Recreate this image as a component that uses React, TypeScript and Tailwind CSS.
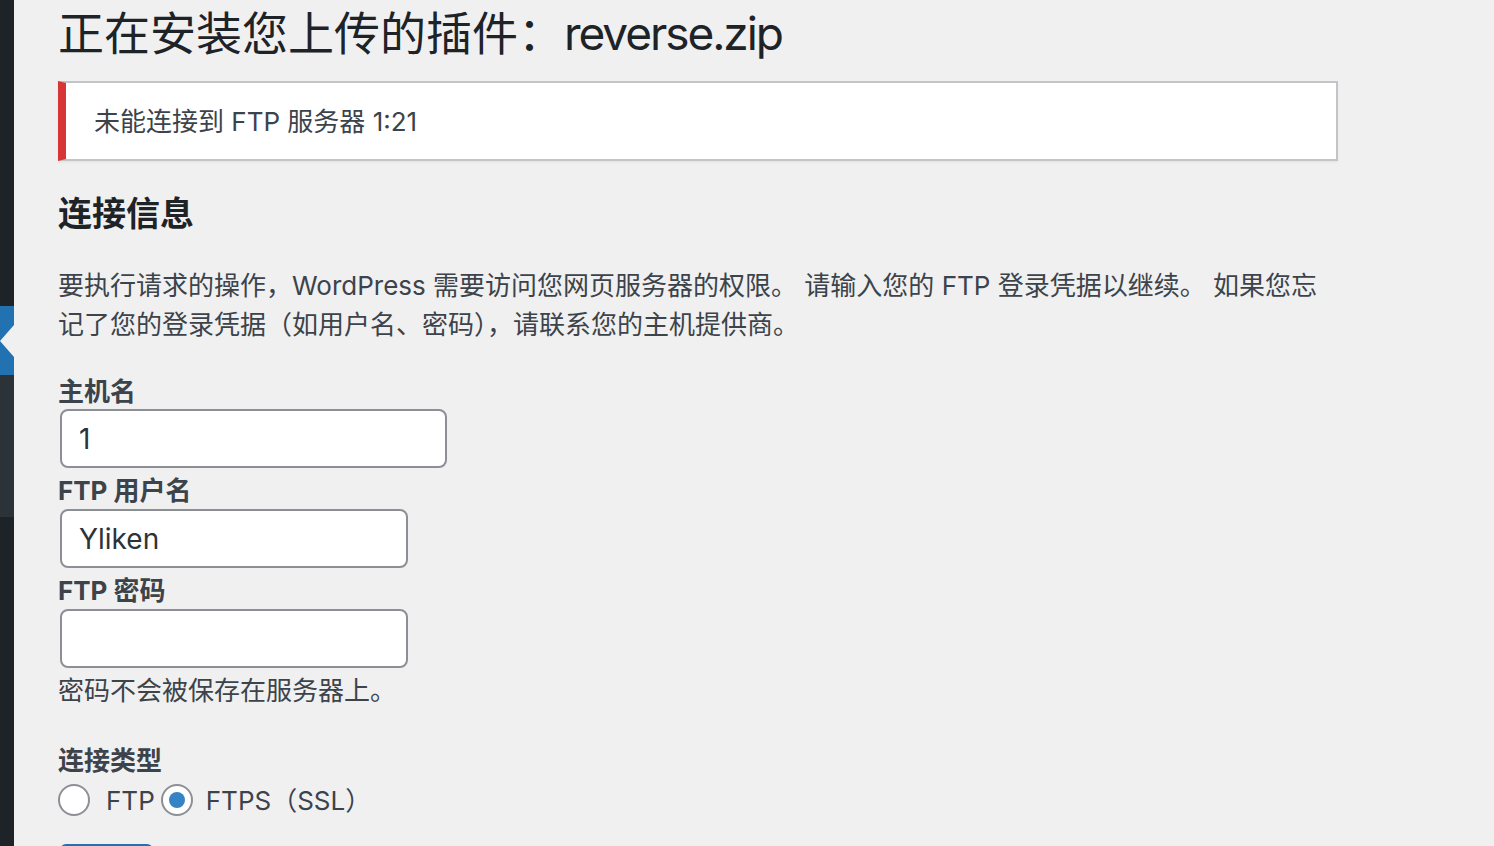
import React from "react";

export default function App() {
  return (
    <div className="flex w-[1494px] h-[846px] overflow-hidden bg-[#f0f0f1] text-[#3c434a] font-['Inter','Noto_Sans_CJK_SC',sans-serif]">
      <div className="w-[14px] shrink-0 flex flex-col">
        <div className="h-[306px] shrink-0 bg-[#1d2327]" />
        <div className="h-[69px] shrink-0 bg-[#2271b1] relative">
          <div className="absolute right-0 top-[19px] w-0 h-0 border-t-[16px] border-b-[16px] border-r-[14px] border-t-transparent border-b-transparent border-r-[#f0f0f1]" />
        </div>
        <div className="h-[142px] shrink-0 bg-[#2c3338]" />
        <div className="flex-1 bg-[#1d2327]" />
      </div>
      <div className="flex-1 pl-[44px]">
        <h1 className="text-[46px] leading-[66px] text-[#1d2327] font-normal whitespace-nowrap">
          正在安装您上传的插件：<span className="tracking-[-0.045em]">reverse.zip</span>
        </h1>
        <div className="mt-[15px] w-[1280px] h-[80px] bg-white border-2 border-[#c3c4c7] border-l-[8px] border-l-[#d63638] flex items-center pl-[28px] shadow-[0_2px_2px_rgba(0,0,0,0.04)]">
          <span className="text-[26px] leading-[39px] text-[#3c434a]">未能连接到 FTP 服务器 1:21</span>
        </div>
        <h2 className="mt-[33px] text-[34px] leading-[40px] font-bold text-[#1d2327]">连接信息</h2>
        <p className="mt-[32px] text-[26px] leading-[39px] w-[1290px]">
          <span className="block whitespace-nowrap">
            要执行请求的操作，WordPress 需要访问您网页服务器的权限。 请输入您的 FTP 登录凭据以继续。 如果您忘
          </span>
          <span className="block whitespace-nowrap">记了您的登录凭据（如用户名、密码），请联系您的主机提供商。</span>
        </p>
        <div className="mt-[30px] text-[26px] leading-[35px] font-bold">主机名</div>
        <div className="ml-[2px] w-[387px] h-[59px] bg-white border-2 border-[#8c8f94] rounded-[8px] flex items-center pl-[17px] text-[28px] text-[#2c3338]">
          1
        </div>
        <div className="pt-[5px] text-[26px] leading-[36px] font-bold">FTP 用户名</div>
        <div className="ml-[2px] w-[348px] h-[59px] bg-white border-2 border-[#8c8f94] rounded-[8px] flex items-center pl-[17px] text-[28px] text-[#2c3338]">
          Yliken
        </div>
        <div className="pt-[5px] text-[26px] leading-[36px] font-bold">FTP 密码</div>
        <div className="ml-[2px] w-[348px] h-[59px] bg-white border-2 border-[#8c8f94] rounded-[8px]" />
        <p className="mt-[3px] text-[26px] leading-[39px]">密码不会被保存在服务器上。</p>
        <div className="mt-[33px] text-[26px] leading-[36px] font-bold">连接类型</div>
        <div className="h-[42px] flex items-center text-[26px]">
          <span className="w-[32px] h-[32px] rounded-full border-2 border-[#8c8f94] bg-white" />
          <span className="ml-[16px]">FTP</span>
          <span className="ml-[6px] w-[32px] h-[32px] rounded-full border-2 border-[#8c8f94] bg-white flex items-center justify-center">
            <span className="w-[16px] h-[16px] rounded-full bg-[#3582c4]" />
          </span>
          <span className="ml-[13px]">FTPS（SSL）</span>
        </div>
        <div className="mt-[23px] ml-[2px] w-[93px] h-[40px] bg-[#2271b1] rounded-[6px]" />
      </div>
    </div>
  );
}
